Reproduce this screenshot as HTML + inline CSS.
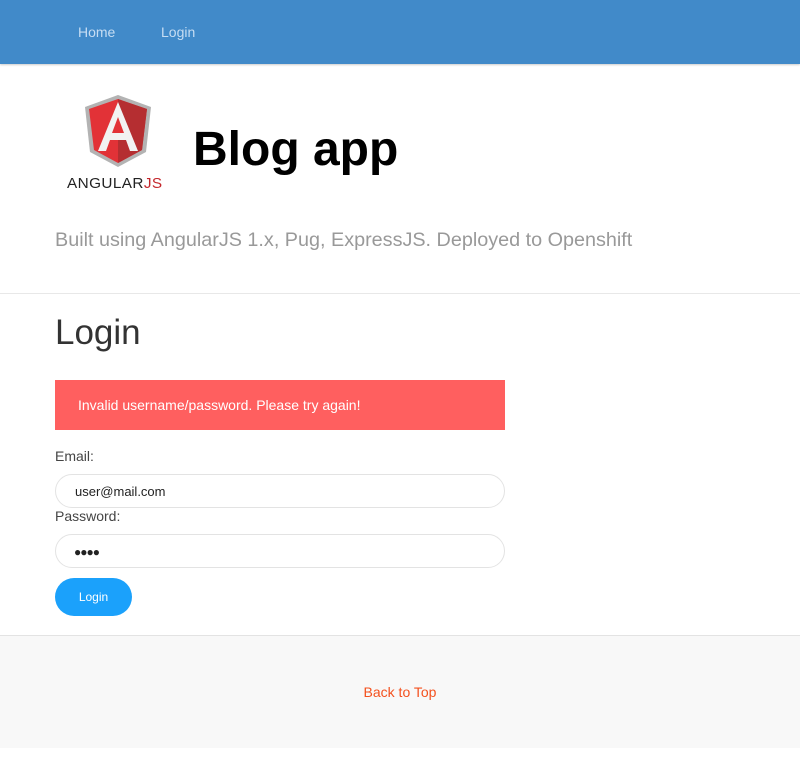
<!DOCTYPE html>
<html><head><style>
*{margin:0;padding:0;box-sizing:border-box}
body{width:800px;height:762px;background:#fff;font-family:"Liberation Sans",sans-serif;position:relative;overflow:hidden}
.nav{position:absolute;left:0;top:0;width:800px;height:64px;background:#418ac9;box-shadow:0 1px 2px rgba(0,0,0,.2)}
.nav span{position:absolute;top:24px;font-size:14px;color:#c6ddf3}
.abs{position:absolute}
</style></head><body>
<div class="nav"><span style="left:78px">Home</span><span style="left:161px">Login</span></div>
<svg class="abs" style="left:84px;top:95px" width="68" height="72" viewBox="0 0 68 72">
<polygon points="34,0 67,12 62,57 34,72 6,57 1,12" fill="#b3b3b3"/>
<polygon points="34,4 63,14 58,55 34,68 10,55 5,14" fill="#e23237"/>
<polygon points="34,4 63,14 58,55 34,68" fill="#b52e31"/>
<polygon points="34,7 14,56 22,56 26,45 42,45 46,56 54,56" fill="#f2f2f2"/>
<polygon points="34,22 40,38 28,38" fill="#e23237"/>
</svg>
<div class="abs" style="left:67px;top:175px;font-size:15px;color:#222;letter-spacing:0.4px;transform:scaleX(1.02);transform-origin:left">ANGULAR<span style="color:#c4262b">JS</span></div>
<div class="abs" style="left:193px;top:122px;font-size:48px;font-weight:bold;color:#000">Blog app</div>
<div class="abs" style="left:55px;top:229px;font-size:19.8px;color:#999">Built using AngularJS 1.x, Pug, ExpressJS. Deployed to Openshift</div>
<div class="abs" style="left:0;top:293px;width:800px;height:1px;background:#e8e8e8"></div>
<div class="abs" style="left:55px;top:313px;font-size:35px;color:#333">Login</div>
<div class="abs" style="left:55px;top:380px;width:450px;height:50px;background:#ff5f5f;color:#fff;font-size:14px;padding:17px 0 0 23px">Invalid username/password. Please try again!</div>
<div class="abs" style="left:55px;top:448px;font-size:14px;color:#444">Email:</div>
<div class="abs" style="left:55px;top:474px;width:450px;height:34px;border:1px solid #e3e3e3;border-radius:17px;font-size:13px;color:#222;padding:9px 0 0 19px">user@mail.com</div>
<div class="abs" style="left:55px;top:508px;font-size:14px;color:#444">Password:</div>
<div class="abs" style="left:55px;top:534px;width:450px;height:34px;border:1px solid #e3e3e3;border-radius:17px;font-size:12px;color:#222;padding:10px 0 0 18px;letter-spacing:-1px">●●●●</div>
<div class="abs" style="left:55px;top:578px;width:77px;height:38px;background:#1ba1fb;border-radius:19px;color:#fff;font-size:12px;text-align:center;line-height:38px">Login</div>
<div class="abs" style="left:0;top:635px;width:800px;height:113px;background:#f8f8f8;border-top:1px solid #e3e3e3"></div>
<div class="abs" style="left:0;top:684px;width:800px;text-align:center;font-size:14px;color:#f4511e">Back to Top</div>
</body></html>
